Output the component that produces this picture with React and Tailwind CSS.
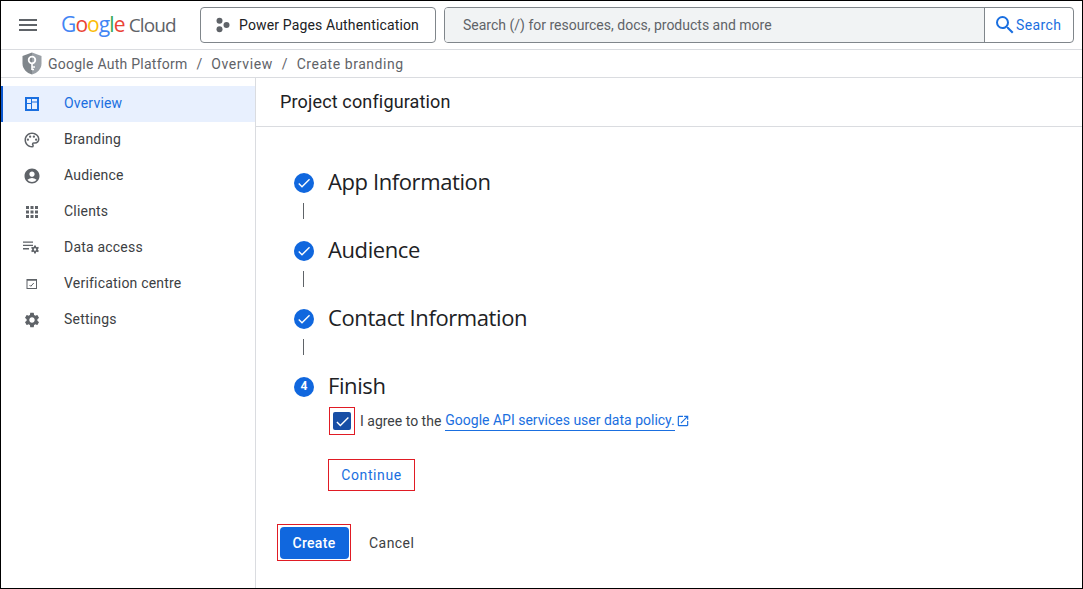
import React from "react";
import { MdMenu, MdSearch, MdOutlinePalette, MdAccountCircle, MdApps, MdSettings, MdOpenInNew, MdCheck } from "react-icons/md";

const OverviewIcon = () => (
  <svg width="14" height="14" viewBox="0 0 14 14" className="text-[#1a6fe0]">
    <path fill="currentColor" fillRule="evenodd" d="M0 0h14v14H0zM2 2v4h4V2zM7 2v2.500h5V2zM7 5.500V12h5V5.500zM2 7v5h4V7z" />
  </svg>
);
const DataIcon = () => (
  <svg width="18" height="18" viewBox="0 0 18 18" className="text-[#5f6368]">
    <path fill="currentColor" d="M0 2.500h10v1.300H0zM0 5.800h10v1.300H0zM0 9.100h6v1.300H0z" />
    <path fill="currentColor" fillRule="evenodd" d="M11.200 6.500h1.600l.3 1.300.8.400 1.200-.5.800 1.400-1 .9v.9l1 .9-.8 1.400-1.200-.5-.8.400-.3 1.300h-1.600l-.3-1.300-.8-.4-1.200.5-.8-1.400 1-.9v-.9l-1-.9.800-1.400 1.200.5.800-.4zM12 9.300a1.200 1.200 0 1 0 0 2.400 1.200 1.200 0 0 0 0-2.400z" />
  </svg>
);
const VerifyIcon = () => (
  <svg width="12" height="12" viewBox="0 0 12 12" className="text-[#5f6368]">
    <rect x="1" y="1.500" width="9.500" height="9" fill="none" stroke="currentColor" strokeWidth="1" />
    <path d="M1 2h9.500" fill="none" stroke="currentColor" strokeWidth="1.500" />
    <path d="M3.500 7l1.300 1.300L7.800 5" fill="none" stroke="currentColor" strokeWidth="1" />
  </svg>
);
const Dots = () => (
  <svg width="16" height="16" viewBox="0 0 16 16" className="text-[#5f6368]">
    <circle cx="4.500" cy="3.800" r="3" fill="currentColor" />
    <circle cx="11.500" cy="8" r="3" fill="currentColor" />
    <circle cx="4.500" cy="12.200" r="3" fill="currentColor" />
  </svg>
);
const Shield = () => (
  <svg width="20" height="23" viewBox="0 0 20 23">
    <path fill="#9aa0a6" d="M10 0.500L19.500 4v7.500c0 5.200-4 9.500-9.500 11z" />
    <path fill="#80868b" d="M10 0.500L0.500 4v7.500c0 5.200 4 9.500 9.500 11z" />
    <circle cx="10" cy="8" r="3.300" fill="none" stroke="#fff" strokeWidth="1.800" />
    <path d="M10 11v7M10 15h3M10 17.500h2" fill="none" stroke="#fff" strokeWidth="1.600" />
  </svg>
);

const nav = [
  { label: "Overview", icon: <OverviewIcon />, active: true },
  { label: "Branding", icon: <MdOutlinePalette size={18} className="text-[#5f6368]" /> },
  { label: "Audience", icon: <MdAccountCircle size={18} className="text-[#5f6368]" /> },
  { label: "Clients", icon: <MdApps size={18} className="text-[#5f6368]" /> },
  { label: "Data access", icon: <DataIcon /> },
  { label: "Verification centre", icon: <VerifyIcon /> },
  { label: "Settings", icon: <MdSettings size={18} className="text-[#5f6368]" /> },
];

const done = ["App Information", "Audience", "Contact Information"];

export default function App() {
  return (
    <div className="box-border h-[589px] w-[1083px] overflow-hidden border border-black bg-white font-['Roboto',sans-serif] text-sm text-[#202124]">
      <header className="box-border flex h-[49px] items-center border-b border-[#dadce0] pb-[1px]">
        <MdMenu size={24} className="ml-[15px] text-[#5f6368]" />
        <div className="ml-[21px] flex w-[117px] items-baseline font-['Open_Sans',sans-serif] text-[21px] leading-none tracking-[-0.9px]">
          <span className="text-[#4285f4]">G</span>
          <span className="text-[#ea4335]">o</span>
          <span className="text-[#fbbc04]">o</span>
          <span className="text-[#4285f4]">g</span>
          <span className="text-[#34a853]">l</span>
          <span className="text-[#ea4335]">e</span>
          <span className="ml-[4px] text-[19px] text-[#5f6368]">Cloud</span>
        </div>
        <button className="ml-[22px] box-border flex h-[36px] w-[236px] items-center rounded border border-[#80868b] pl-[14px] text-[14px] tracking-[0.15px] text-[#202124]">
          <Dots />
          <span className="ml-[8px]">Power Pages Authentication</span>
        </button>
        <div className="ml-[8px] box-border flex h-[36px] w-[630px] items-stretch overflow-hidden rounded border border-[#80868b]">
          <div className="flex flex-1 items-center bg-[#f1f3f4] pl-[18px] text-[14px] text-[#5f6368]">
            Search (/) for resources, docs, products and more
          </div>
          <div className="flex w-[89px] items-center border-l border-[#80868b] pl-[9px] text-[14px] font-[450] text-[#1a6fe0]">
            <MdSearch size={24} className="-ml-[1px]" />
            <span className="ml-[-1px] mt-[1px] tracking-[0.4px]">Search</span>
          </div>
        </div>
      </header>

      <nav className="box-border flex h-[28px] items-center border-b border-[#dadce0] pl-[21px] text-[14px] font-[450] text-[#5f6368]">
        <Shield />
        <span className="ml-[6px] tracking-[0.25px]">Google Auth Platform</span>
        <span className="mx-[9px] font-normal">/</span>
        <span className="tracking-[0.6px]">Overview</span>
        <span className="mx-[9px] font-normal">/</span>
        <span className="tracking-[0.55px]">Create branding</span>
      </nav>

      <div className="flex h-[510px]">
        <aside className="box-border w-[255px] shrink-0 border-r border-[#dadce0] pt-[8px]">
          {nav.map((n) => (
            <div
              key={n.label}
              className={
                n.active
                  ? "flex h-[36px] items-center border-l-2 border-[#0b57d0] bg-[#e8f0fe] pb-[2px] text-[#1a6fe0]"
                  : "flex h-[36px] items-center border-l-2 border-transparent pb-[2px] text-[#3c4043]"
              }
            >
              <span className="flex w-[58px] translate-y-[1px] justify-center">{n.icon}</span>
              <span className="ml-[3px] tracking-[0.2px]">{n.label}</span>
            </div>
          ))}
        </aside>

        <main className="flex-1">
          <div className="box-border flex h-[49px] items-center border-b border-[#dadce0] pl-[24px] text-[18px] tracking-[0.15px] text-[#202124]">
            Project configuration
          </div>
          <div className="pl-[38px] pt-[42px]">
            {done.map((t) => (
              <div key={t} className="h-[68px]">
                <div className="flex h-[28px] items-center">
                  <span className="flex h-[20px] w-[20px] items-center justify-center rounded-full bg-[#1067de] text-white">
                    <MdCheck size={16} />
                  </span>
                  <span className="mb-[2px] ml-[14px] font-['Open_Sans',sans-serif] text-[22px] tracking-[-0.4px]">{t}</span>
                </div>
                <div className="ml-[9px] mt-[6px] h-[16px] w-px bg-[#5f6368]" />
              </div>
            ))}
            <div className="flex h-[28px] items-center">
              <span className="flex h-[20px] w-[20px] items-center justify-center rounded-full bg-[#1067de] text-[12px] font-bold text-white">4</span>
              <span className="mb-[2px] ml-[14px] font-['Open_Sans',sans-serif] text-[22px] tracking-[-0.4px]">Finish</span>
            </div>
            <div className="ml-[35px] mt-[6px] flex items-center">
              <div className="box-border flex h-[28px] w-[26px] items-center justify-center border border-[#e01b24]">
                <span className="flex h-[18px] w-[18px] items-center justify-center rounded-[2px] bg-[#174ea6] text-white">
                  <MdCheck size={17} />
                </span>
              </div>
              <span className="ml-[5px] text-[14px] text-[#3c4043]">I agree to the</span>
              <a className="ml-[4px] border-b border-[#1a6fe0] text-[14px] leading-[19px] text-[#1a6fe0]">Google API services user data policy.</a>
              <MdOpenInNew size={14} className="ml-[2px] -translate-x-[1px] text-[#1a6fe0]" />
            </div>
            <button className="ml-[34px] mt-[24px] box-border block h-[32px] w-[87px] border border-[#e01b24] text-[14px] font-[450] tracking-[0.6px] text-[#1a6fe0]">
              Continue
            </button>
          </div>
          <div className="ml-[21px] mt-[33px] flex items-center">
            <div className="box-border flex h-[37px] w-[74px] items-center justify-center border border-[#e01b24]">
              <button className="h-[32px] w-[69px] rounded bg-[#1067de] text-[14px] font-medium tracking-[0.3px] text-white">Create</button>
            </div>
            <span className="ml-[18px] text-[14px] font-[450] tracking-[0.45px] text-[#3c4043]">Cancel</span>
          </div>
        </main>
      </div>
    </div>
  );
}
